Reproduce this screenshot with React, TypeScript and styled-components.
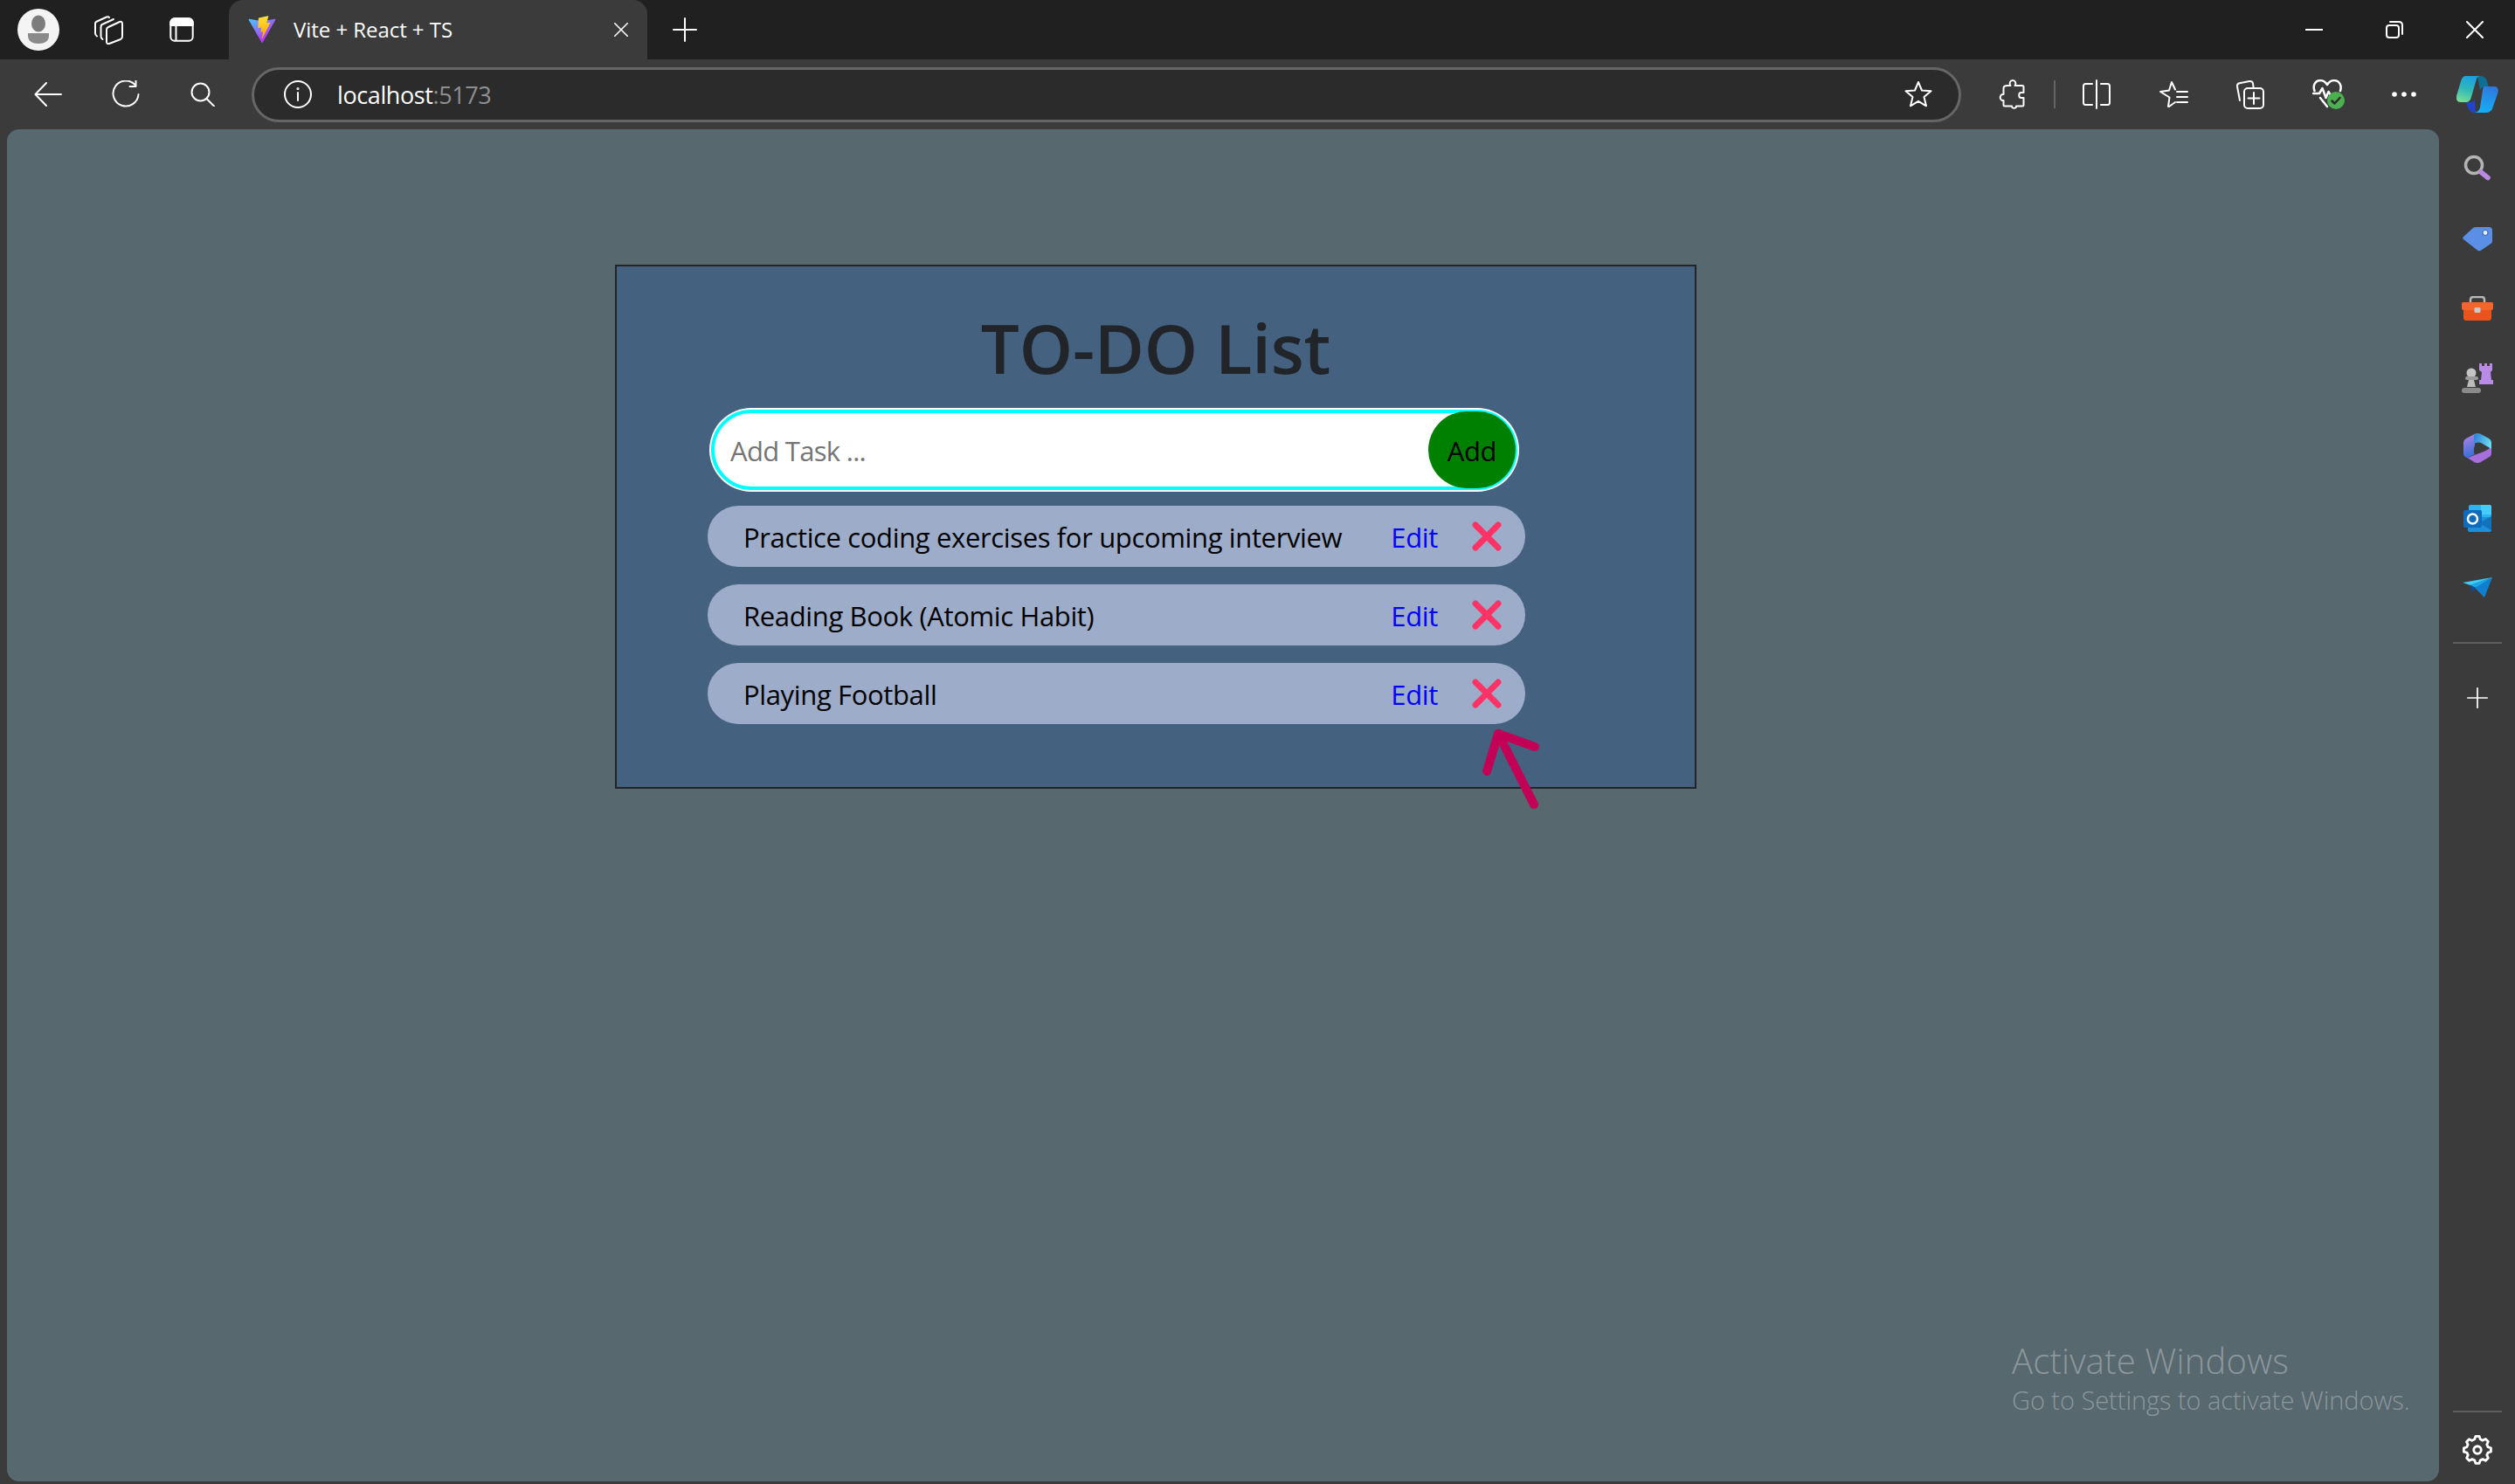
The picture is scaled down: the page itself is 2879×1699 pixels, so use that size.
import React from 'react'
import styled, { createGlobalStyle } from 'styled-components'
import { X } from 'lucide-react'

const GlobalStyle = createGlobalStyle`
  html, body {
    margin: 0;
    padding: 0;
    background: #3b3b3b;
    overflow: hidden;
  }
  * {
    box-sizing: border-box;
  }
`

const Window = styled.div`
  width: 2879px;
  height: 1699px;
  display: flex;
  flex-direction: column;
  font-family: "Open Sans", "Noto Sans", sans-serif;
  background: #3b3b3b;
`

const TitleBar = styled.header`
  height: 68px;
  flex: none;
  display: flex;
  align-items: center;
  background: #202020;
`

const Slot = styled.div<{ $w: number; $gap?: number }>`
  width: ${p => p.$w}px;
  flex: none;
  display: flex;
  align-items: center;
  justify-content: center;
  margin-left: ${p => p.$gap ?? 0}px;
`

const Tab = styled.div`
  width: 479px;
  height: 68px;
  flex: none;
  display: flex;
  align-items: center;
  margin-left: 6px;
  padding: 0 22px;
  background: #3b3b3b;
  border-radius: 16px 16px 0 0;
  color: #fff;
`

const TabTitle = styled.span`
  flex: 1;
  margin: -2px 0 0 20px;
  font-size: 24px;
  letter-spacing: -0.05px;
  white-space: nowrap;
`

const Spacer = styled.div`
  flex: 1;
`

const Toolbar = styled.nav`
  height: 80px;
  flex: none;
  display: flex;
  align-items: center;
  padding-left: 11px;
  background: #3b3b3b;
`

const AddressBar = styled.div`
  width: 1957px;
  height: 63px;
  flex: none;
  display: flex;
  align-items: center;
  margin-left: 13px;
  padding: 0 30px 0 34px;
  background: #2b2b2b;
  border: 3px solid #666;
  border-radius: 32px;
`

const Url = styled.span`
  flex: 1;
  margin-left: 29px;
  font-size: 27px;
  letter-spacing: -0.4px;
  color: #fff;
`

const UrlPort = styled.span`
  color: #8f8f8f;
`

const Divider = styled.div`
  width: 2px;
  height: 32px;
  flex: none;
  background: #666;
`

const Main = styled.div`
  flex: 1;
  min-height: 0;
  display: flex;
`

const Content = styled.main`
  position: relative;
  width: 2784px;
  flex: none;
  margin: 0 0 3px 8px;
  padding: 155px 0 0 696px;
  background: #58686f;
  border-radius: 14px;
`

const Card = styled.section`
  position: relative;
  width: 1238px;
  height: 600px;
  padding-top: 41px;
  background: #44617f;
  border: 2px solid #212529;
`

const Title = styled.h1`
  margin: 0;
  font-size: 78px;
  line-height: 104px;
  font-weight: 560;
  letter-spacing: -0.2px;
  text-align: center;
  color: #212529;
`

const TaskForm = styled.form`
  width: 923px;
  height: 92px;
  display: flex;
  align-items: center;
  margin: 19px 0 0 108px;
  background: #fff;
  border: 4px solid #00ffff;
  border-radius: 46px;
  box-shadow: 0 0 0 2px #fff;
`

const TaskInput = styled.input`
  flex: 1;
  min-width: 0;
  height: 100%;
  padding: 2px 0 0 18px;
  font-family: inherit;
  font-size: 31px;
  letter-spacing: -0.7px;
  color: #212529;
  background: transparent;
  border: none;
  outline: none;
  &::placeholder {
    color: #757575;
    opacity: 1;
  }
`

const AddButton = styled.button`
  width: 100px;
  height: 88px;
  flex: none;
  margin-right: -2px;
  padding: 2px 0 0;
  font-family: inherit;
  font-size: 31px;
  letter-spacing: -0.4px;
  color: #000;
  background: #008000;
  border: none;
  border-radius: 44px;
`

const TaskList = styled.ul`
  width: 936px;
  display: flex;
  flex-direction: column;
  gap: 20px;
  margin: 18px 0 0 104px;
  padding: 0;
  list-style: none;
`

const TaskRow = styled.li`
  height: 70px;
  display: flex;
  align-items: center;
  padding: 2px 18px 0 41px;
  font-size: 31px;
  letter-spacing: -0.36px;
  color: #000;
  background: #9dacc9;
  border-radius: 35px;
`

const TaskText = styled.span`
  flex: 1;
  white-space: nowrap;
`

const EditLink = styled.a`
  color: #0000ff;
  margin-right: 30px;
  cursor: pointer;
`

const DeleteButton = styled.button`
  display: flex;
  margin-top: -2px;
  padding: 0;
  color: #ff3366;
  background: none;
  border: none;
`

const PointerArrow = styled.svg`
  position: absolute;
  left: 984px;
  top: 525px;
`

const Watermark = styled.div`
  position: absolute;
  left: 2295px;
  top: 1385px;
  font-weight: 300;
  color: rgba(255, 255, 255, 0.32);
  white-space: nowrap;
`

const WatermarkTitle = styled.div`
  font-size: 40px;
  line-height: 50px;
  letter-spacing: 0.2px;
`

const WatermarkText = styled.div`
  font-size: 29px;
  line-height: 40px;
  letter-spacing: -0.05px;
`

const SideBar = styled.aside`
  flex: 1;
  display: flex;
  flex-direction: column;
  align-items: center;
  padding-top: 5px;
`

const SideSlot = styled.div<{ $h?: number }>`
  width: 100%;
  height: ${p => p.$h ?? 80}px;
  flex: none;
  display: flex;
  align-items: center;
  justify-content: center;
`

const SideRule = styled.div<{ $push?: boolean; $below: number }>`
  width: 56px;
  height: 2px;
  flex: none;
  margin-top: ${p => (p.$push ? 'auto' : '22px')};
  margin-bottom: ${p => p.$below}px;
  background: #5f5f5f;
`

const Line = styled.svg.attrs({ fill: 'none', stroke: '#fff', strokeWidth: 2, strokeLinecap: 'round', strokeLinejoin: 'round' })``

const PlusIcon = ({ size }: { size: number }) => (
  <Line width={size} height={size} viewBox="0 0 28 28">
    <path d="M14 1v26M1 14h26" />
  </Line>
)

const Avatar = () => (
  <svg width="48" height="48" viewBox="0 0 48 48">
    <circle cx="24" cy="24" r="24" fill="#f4f4f4" />
    <ellipse cx="24" cy="17" rx="8" ry="9.5" fill="#7c7c7c" />
    <path d="M12 28h24v3c0 6-5 9-12 9s-12-3-12-9z" fill="#8a8a8a" />
  </svg>
)

const ViteLogo = () => (
  <svg width="32" height="32" viewBox="0 0 410 404">
    <defs>
      <linearGradient id="viteA" x1="6" y1="33" x2="235" y2="344" gradientUnits="userSpaceOnUse">
        <stop stopColor="#41D1FF" />
        <stop offset="1" stopColor="#BD34FE" />
      </linearGradient>
      <linearGradient id="viteB" x1="194.65" y1="8.82" x2="236.08" y2="292.99" gradientUnits="userSpaceOnUse">
        <stop stopColor="#FFEA83" />
        <stop offset="0.08" stopColor="#FFDD35" />
        <stop offset="1" stopColor="#FFA800" />
      </linearGradient>
    </defs>
    <path d="M399.641 59.5246L215.643 388.545C211.844 395.338 202.084 395.378 198.228 388.618L10.5817 59.5563C6.38087 52.1896 12.6802 43.2665 21.0281 44.7586L205.223 77.6824C206.398 77.8924 207.601 77.8904 208.776 77.6763L389.119 44.8058C397.439 43.2894 403.768 52.1434 399.641 59.5246Z" fill="url(#viteA)" />
    <path d="M292.965 1.5744L156.801 28.2552C154.563 28.6937 152.906 30.5903 152.771 32.8664L144.395 174.33C144.198 177.662 147.258 180.248 150.51 179.498L188.42 170.749C191.967 169.931 195.172 173.055 194.443 176.622L183.18 231.775C182.422 235.487 185.907 238.661 189.532 237.56L212.947 230.446C216.577 229.344 220.065 232.527 219.297 236.242L201.398 322.875C200.278 328.294 207.486 331.249 210.492 326.603L212.5 323.5L323.454 102.072C325.312 98.3645 322.108 94.137 318.036 94.9228L279.014 102.454C275.347 103.161 272.227 99.746 273.262 96.1583L298.731 7.86689C299.767 4.27314 296.636 0.855181 292.965 1.5744Z" fill="url(#viteB)" />
  </svg>
)

const WorkspacesIcon = () => (
  <Line width="33" height="33" viewBox="0 0 33 33" strokeWidth="2.2">
    <path d="M3 23.500C1.500 22.500 1 21.500 1 20V9.500C1 8 1.500 7 3 6.500L14 1.500c1.500-.6 2.500-.3 3 .5" />
    <path d="M9.500 27C8 26 7.500 25 7.500 23.500V13C7.500 11.500 8 10 10 9.500L22 4" />
    <path d="M14 16c0-1.500.8-2.500 2-3l13-6c1.700-.7 3 .3 3 2v15c0 1.500-.8 2.500-2 3l-13 5c-1.700.7-3-.3-3-2z" />
  </Line>
)

const VerticalTabsIcon = () => (
  <Line width="28" height="28" viewBox="0 0 28 28" strokeWidth="2.5">
    <rect x="1.300" y="1.300" width="25.400" height="25.400" rx="4.500" />
    <path d="M7.500 9v17" />
    <path d="M1.300 9V5.800c0-2.500 2-4.500 4.500-4.500h16.400c2.500 0 4.500 2 4.500 4.500V9z" fill="#fff" />
  </Line>
)

const BackIcon = () => (
  <Line width="32" height="28" viewBox="0 0 32 28">
    <path d="M31 14H2M14 1 1.500 14 14 27" />
  </Line>
)

const ReloadIcon = () => (
  <Line width="34" height="32" viewBox="0 0 34 32">
    <path d="M28 5.500A14.500 14.500 0 1 0 31.500 16" />
    <path d="M28.500 0v7h-7" />
  </Line>
)

const SearchIcon = () => (
  <Line width="28" height="28" viewBox="0 0 28 28">
    <circle cx="11.500" cy="11.500" r="10" />
    <path d="m18.500 19 8.500 8.500" />
  </Line>
)

const InfoIcon = () => (
  <Line width="32" height="32" viewBox="0 0 32 32">
    <circle cx="16" cy="16" r="15" />
    <path d="M16 14v9" />
    <circle cx="16" cy="9.500" r="0.600" />
  </Line>
)

const StarIcon = () => (
  <Line width="32" height="32" viewBox="0 0 32 32" stroke="#8c8c8c">
    <path d="m16 2 4 9.500 10.500.8-8 6.800 2.500 10.200L16 23.800 7 29.300l2.500-10.200-8-6.800 10.500-.8z" />
  </Line>
)

const PuzzleIcon = () => (
  <Line width="30" height="34" viewBox="0 0 30 34" strokeWidth="2.500">
    <path d="M10 7h3.500c-2-2.500-.5-6 2.500-6s4.500 3.500 2.500 6H27c1 0 1.500.6 1.500 1.500V15h-3c-3 0-3 6 0 6h3v8c0 1-.6 1.500-1.500 1.500h-7c.8 3-5.500 3-5 0H7c-1 0-1.500-.6-1.500-1.500v-5c-5 1-5-8 0-7v-7C5.500 8 7 7 10 7z" />
  </Line>
)

const SplitIcon = () => (
  <Line width="32" height="34" viewBox="0 0 32 34">
    <path d="M11 5H3.500C2 5 1 6 1 7.500v19C1 28 2 29 3.500 29H11M21 5h7.500C30 5 31 6 31 7.500v19c0 1.500-1 2.500-2.500 2.500H21M16 1v32" />
  </Line>
)

const FavoritesIcon = () => (
  <Line width="34" height="32" viewBox="0 0 34 32" strokeWidth="2.500">
    <path d="m11 30 1.500-10.500L2 13l10-1.500L15 2l4 8.500" />
    <path d="M12 30l7-5M21 13h12M21 19h12M21 25h12" />
  </Line>
)

const CollectionsIcon = () => (
  <Line width="34" height="34" viewBox="0 0 34 34">
    <path d="M5 24 2 8c-.3-2 .6-3.400 2.500-3.800L16 2c2-.3 3.500.6 4 2.500l.5 4" />
    <rect x="10" y="10" width="22" height="23" rx="4" />
    <path d="M21 15v13M14.500 21.500h13" />
  </Line>
)

const HealthIcon = () => (
  <svg width="38" height="34" viewBox="0 0 38 34" fill="none" stroke="#fff" strokeWidth="2.500" strokeLinecap="round" strokeLinejoin="round">
    <path d="M2.500 13C0 6 4 1 9 1c4 0 6 2 8 5 2-3 5-5 8-5 6 0 9 6 7 12" />
    <path d="M1 16h7l3.500-6 4 11 3-7 2 3" />
    <path d="m9 21 8 10" />
    <circle cx="27" cy="24" r="10" fill="#4caf50" stroke="none" />
    <path d="m22.500 24.500 3 3 6-6.500" stroke="#2b2b2b" />
  </svg>
)

const DotsIcon = () => (
  <svg width="28" height="6" viewBox="0 0 28 6" fill="#fff">
    <circle cx="3" cy="3" r="2.800" />
    <circle cx="14" cy="3" r="2.800" />
    <circle cx="25" cy="3" r="2.800" />
  </svg>
)

const CopilotLogo = () => (
  <svg width="48" height="42" viewBox="0 0 48 42">
    <defs>
      <linearGradient id="copA" x1="0.600" y1="0" x2="0.300" y2="1">
        <stop stopColor="#1a9fe4" />
        <stop offset="0.500" stopColor="#2fb8b8" />
        <stop offset="1" stopColor="#78dc98" />
      </linearGradient>
      <linearGradient id="copB" x1="0.600" y1="0" x2="0.400" y2="1">
        <stop stopColor="#2f78de" />
        <stop offset="1" stopColor="#14b0f5" />
      </linearGradient>
    </defs>
    <path d="M24 0h3c4 0 7 2 8 6l2 7h-6c-2 0-3 1-4 3z" fill="#0e6f94" />
    <path d="M11 30h6c2 0 3-2 4-4l1 16h-2c-4 0-7-4-9-12z" fill="#2244c8" />
    <path d="M10 0h17c-2 0-3.500 1.500-4 3.500L17 24c-1 4-3 6-7 6H5c-4 0-6-3-5-7L5 6c1-4 3-6 5-6z" fill="url(#copA)" />
    <path d="M32 12h11c4 0 5.500 3 4.500 7L41.500 36c-1 4-4.500 6-8.500 6H20c4 0 6-3 7-6l3-20c.3-2 1-4 2-4z" fill="url(#copB)" />
  </svg>
)

const MinimizeIcon = () => (
  <Line width="20" height="4" viewBox="0 0 20 4">
    <path d="M0 2h20" />
  </Line>
)

const RestoreIcon = () => (
  <Line width="20" height="20" viewBox="0 0 20 20">
    <rect x="1" y="5" width="14" height="14" rx="3" />
    <path d="M5 1h10c2.500 0 4 1.500 4 4v10" />
  </Line>
)

const CloseIcon = ({ size }: { size: number }) => (
  <Line width={size} height={size} viewBox="0 0 20 20">
    <path d="M1 1l18 18M19 1 1 19" />
  </Line>
)

const LensIcon = () => (
  <svg width="32" height="32" viewBox="0 0 32 32" fill="none">
    <circle cx="12" cy="12" r="9.500" stroke="#b4b4b4" strokeWidth="3.500" />
    <path d="m20 20 8 6.500" stroke="#b98ae0" strokeWidth="5.500" strokeLinecap="round" />
  </svg>
)

const TagIcon = () => (
  <svg width="34" height="32" viewBox="0 0 34 32">
    <path d="M15 3h16c1.500 0 3 1.500 3 3v13c0 1-.5 2-1 2.500L22 29c-1 1-3 2-5 .5L1 17c-1-1-1-2 0-3L12 4c1-.7 2-1 3-1z" fill="#5b8fe6" />
    <circle cx="26" cy="9.500" r="3" fill="#eee" stroke="#3f6fc0" strokeWidth="1.200" />
  </svg>
)

const ToolboxIcon = () => (
  <svg width="36" height="28" viewBox="0 0 36 28">
    <path d="M10 9V4c0-2 1-3 3-3h10c2 0 3 1 3 3v5" fill="none" stroke="#b9b9b9" strokeWidth="2.500" />
    <rect x="2" y="9" width="32" height="19" rx="3" fill="#e8541a" />
    <rect x="0" y="7" width="36" height="9" rx="2" fill="#f2662b" />
    <rect x="14.500" y="13" width="7" height="6" rx="1.500" fill="#c9c9c9" />
  </svg>
)

const ChessIcon = () => (
  <svg width="36" height="36" viewBox="0 0 36 36">
    <path d="M20 1h3v3h3V1h3v3h3V1h3v8l-2 2 1 9h2v5H20v-5h2l1-9-3-2z" fill="#b98ae6" />
    <circle cx="11" cy="12" r="5.500" fill="#c4c4c4" />
    <rect x="4" y="16" width="15" height="4" rx="2" fill="#9a9a9a" />
    <path d="M8 20h6l2 8H6z" fill="#bcbcbc" />
    <rect x="0" y="29" width="22" height="6" rx="3" fill="#8a8a8a" />
  </svg>
)

const M365Icon = () => (
  <svg width="32" height="34" viewBox="0 0 32 34">
    <defs>
      <linearGradient id="m3A" x1="0.400" y1="0" x2="0.600" y2="1">
        <stop stopColor="#b083e4" />
        <stop offset="1" stopColor="#2f6fd8" />
      </linearGradient>
      <linearGradient id="m3B" x1="0" y1="0.300" x2="1" y2="0.600">
        <stop stopColor="#2c84d8" />
        <stop offset="1" stopColor="#6fdcf0" />
      </linearGradient>
    </defs>
    <path d="M32 15v8c0 2-1 3.500-3 4.500l-10 6c-2 .7-4 .7-6 0l-8-5c3-1.500 6-3 9-4l8-3c4-1.500 7-3 10-6.500z" fill="#a66fdc" />
    <path d="M13.500.5 3 6C1 7 0 9 0 11v12c0 2 1 3.500 3 4.500l2 1.200c3-2.500 6-4 8-4.500-1.500-2-1.500-6 0-8V2z" fill="url(#m3A)" />
    <path d="M13 .5c2-.7 4-.7 6 0l10 5.500c2 1 3 3 3 5v7l-11-6.500c-3-1.500-6-1-8.500.5L12 3z" fill="url(#m3B)" />
    <circle cx="16.500" cy="17.500" r="4.500" fill="#3b3b3b" />
  </svg>
)

const OutlookIcon = () => (
  <svg width="32" height="32" viewBox="0 0 32 32">
    <rect x="6" y="1" width="26" height="22" rx="2" fill="#2cb4ee" />
    <path d="M20 1h10c1 0 2 1 2 2v9H20z" fill="#43cdf8" />
    <path d="M5 15h27v15c0 1-1 2-2 2H7c-1 0-2-1-2-2z" fill="#1d8fd8" />
    <path d="m18 22 14-8v16z" fill="#1272bc" />
    <rect x="0" y="7" width="21" height="20" rx="2" fill="#0f6cbd" />
    <ellipse cx="10.500" cy="17" rx="5.500" ry="5.500" fill="none" stroke="#fff" strokeWidth="2.500" />
  </svg>
)

const SendIcon = () => (
  <svg width="34" height="24" viewBox="0 0 34 24">
    <path d="M0 6 34 0 9 9z" fill="#3dcdf5" />
    <path d="M34 0 9 9l16 8z" fill="#19a7ea" />
    <path d="M34 0 25 23 14 12z" fill="#0f7fd0" />
    <path d="M9 9l2 8 4-5z" fill="#0a4f9c" />
  </svg>
)

const GearIcon = () => (
  <Line width="34" height="34" viewBox="0 0 24 24" strokeWidth="1.400">
    <path d="M9.700 3.400 10.500 1h3l.8 2.400 2 .9 2.300-1.100 2.100 2.100-1.100 2.300.9 2 2.400.8v3l-2.400.8-.9 2 1.100 2.300-2.100 2.100-2.300-1.100-2 .9-.8 2.400h-3l-.8-2.400-2-.9-2.300 1.100-2.100-2.100 1.100-2.300-.9-2L1 13.500v-3l2.400-.8.900-2-1.100-2.300 2.100-2.100 2.300 1.100z" />
    <circle cx="12" cy="12" r="3" />
  </Line>
)

const tasks = [
  'Practice coding exercises for upcoming interview',
  'Reading Book (Atomic Habit)',
  'Playing Football',
]

const sideIcons = [LensIcon, TagIcon, ToolboxIcon, ChessIcon, M365Icon, OutlookIcon, SendIcon]

function App() {
  return (
    <Window>
      <GlobalStyle />
      <TitleBar>
        <Slot $w={88}><Avatar /></Slot>
        <Slot $w={72}><WorkspacesIcon /></Slot>
        <Slot $w={96}><VerticalTabsIcon /></Slot>
        <Tab>
          <ViteLogo />
          <TabTitle>Vite + React + TS</TabTitle>
          <CloseIcon size={16} />
        </Tab>
        <Slot $w={86}><PlusIcon size={28} /></Slot>
        <Spacer />
        <Slot $w={92}><MinimizeIcon /></Slot>
        <Slot $w={92}><RestoreIcon /></Slot>
        <Slot $w={92}><CloseIcon size={20} /></Slot>
      </TitleBar>
      <Toolbar>
        <Slot $w={88}><BackIcon /></Slot>
        <Slot $w={90}><ReloadIcon /></Slot>
        <Slot $w={86}><SearchIcon /></Slot>
        <AddressBar>
          <InfoIcon />
          <Url>localhost<UrlPort>:5173</UrlPort></Url>
          <StarIcon />
        </AddressBar>
        <Slot $w={96} $gap={10}><PuzzleIcon /></Slot>
        <Divider />
        <Slot $w={94}><SplitIcon /></Slot>
        <Slot $w={82}><FavoritesIcon /></Slot>
        <Slot $w={94}><CollectionsIcon /></Slot>
        <Slot $w={86}><HealthIcon /></Slot>
        <Slot $w={86}><DotsIcon /></Slot>
        <Slot $w={82}><CopilotLogo /></Slot>
      </Toolbar>
      <Main>
        <Content>
          <Card>
            <Title>TO-DO List</Title>
            <TaskForm onSubmit={e => e.preventDefault()}>
              <TaskInput placeholder="Add Task ..." />
              <AddButton type="submit">Add</AddButton>
            </TaskForm>
            <TaskList>
              {tasks.map(task => (
                <TaskRow key={task}>
                  <TaskText>{task}</TaskText>
                  <EditLink>Edit</EditLink>
                  <DeleteButton aria-label="Delete"><X size={52} strokeWidth={3.2} /></DeleteButton>
                </TaskRow>
              ))}
            </TaskList>
            <PointerArrow width="80" height="100" viewBox="0 0 80 100" fill="none" stroke="#c20056" strokeWidth="10" strokeLinecap="round" strokeLinejoin="round">
              <path d="M66 91 25 10M12 53 25 10l42 15" />
            </PointerArrow>
          </Card>
          <Watermark>
            <WatermarkTitle>Activate Windows</WatermarkTitle>
            <WatermarkText>Go to Settings to activate Windows.</WatermarkText>
          </Watermark>
        </Content>
        <SideBar>
          {sideIcons.map((Icon, i) => (
            <SideSlot key={i}><Icon /></SideSlot>
          ))}
          <SideRule $below={22} />
          <SideSlot><PlusIcon size={24} /></SideSlot>
          <SideRule $push $below={4} />
          <SideSlot $h={78}><GearIcon /></SideSlot>
        </SideBar>
      </Main>
    </Window>
  )
}

export default App
